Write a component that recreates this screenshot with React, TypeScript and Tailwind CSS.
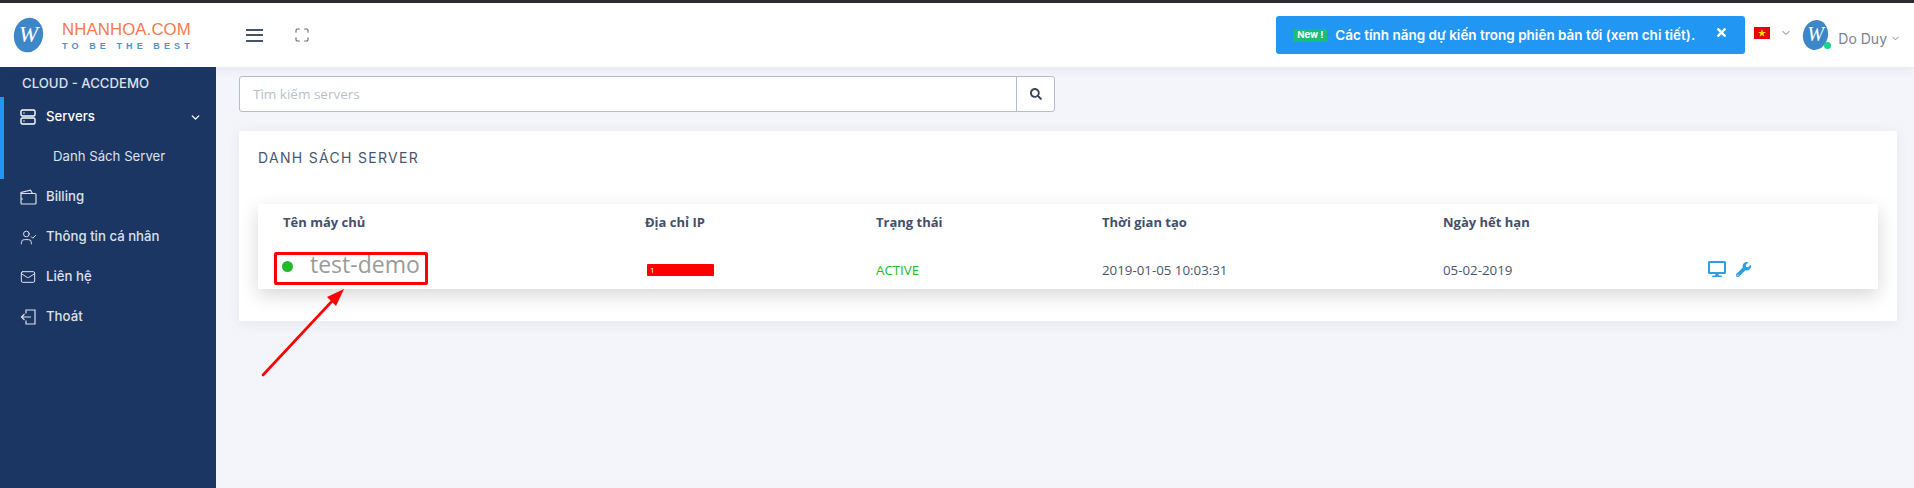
import React from "react";
import { Maximize, ChevronDown, UserCheck, Mail } from "lucide-react";
import { FaDesktop, FaWrench, FaSearch, FaTimes } from "react-icons/fa";

const menuFont = "font-['Inter','Liberation_Sans',sans-serif]";

function ServerIcon() {
  return (
    <svg width="16" height="16" viewBox="0 0 16 16" fill="none" stroke="currentColor" strokeWidth="1.4">
      <rect x="1" y="1" width="14" height="6" rx="1.5" />
      <rect x="1" y="9" width="14" height="6" rx="1.5" />
      <path d="M3.5 4h1M3.5 12h1" />
    </svg>
  );
}

function WalletIcon() {
  return (
    <svg width="17" height="16" viewBox="0 0 17 16" fill="none" stroke="currentColor" strokeWidth="1.2">
      <path d="M1 5V3.5L10.5 1.2 12.5 4.5" />
      <rect x="1" y="4.5" width="15" height="10.5" rx="1" />
      <path d="M1 10h2" />
    </svg>
  );
}

function ExitIcon() {
  return (
    <svg width="16" height="16" viewBox="0 0 16 16" fill="none" stroke="currentColor" strokeWidth="1.2">
      <path d="M6 4.5V1h9v14H6v-3.5" />
      <path d="M11 8H1.5M4.5 5L1.5 8l3 3" />
    </svg>
  );
}

function LogoMark({ w, h, size = 22 }: { w: number; h: number; size?: number }) {
  return (
    <svg width={w} height={h} viewBox="0 0 32 36">
      <ellipse cx="16" cy="18" rx="15" ry="18" transform="rotate(12 16 18)" fill="#3d87c8" />
      <text x="16" y="25" textAnchor="middle" fontFamily="Liberation Serif, serif" fontStyle="italic" fontSize={size} fill="#fff">
        W
      </text>
    </svg>
  );
}

function MenuRow({ icon, label }: { icon: React.ReactNode; label: string }) {
  return (
    <div className="flex h-10 items-center pl-5">
      <span className="flex w-[26px] shrink-0 items-center">{icon}</span>
      <span>{label}</span>
    </div>
  );
}

export default function App() {
  return (
    <div className="relative flex h-[488px] w-[1914px] flex-col overflow-hidden bg-[#f4f5fa] font-['Open_Sans','Liberation_Sans',sans-serif] text-[#4a5670]">
      <div className="h-[3px] shrink-0 bg-[#2b2d31]" />

      <header className="relative z-10 flex h-16 shrink-0 items-center bg-white shadow-[0_2px_10px_rgba(60,70,110,0.08)]">
        <div className="flex w-[246px] shrink-0 items-center pl-[13px]">
          <LogoMark w={31} h={36} size={24} />
          <div className="ml-[18px] flex flex-col pt-[3px]">
            <span className="text-[16.8px] leading-[16px] tracking-[0.1px] text-[#f47b4f] font-['Liberation_Sans',sans-serif]">NHANHOA.COM</span>
            <span className="mt-[3px] text-[9px] leading-[10px] font-bold tracking-[4.1px] whitespace-nowrap text-[#4b95d1] font-['Liberation_Sans',sans-serif]">TO BE THE BEST</span>
          </div>
        </div>
        <div className="flex w-[17px] flex-col gap-[3.5px]">
          <span className="h-[2px] bg-[#46536b]" />
          <span className="h-[2px] bg-[#46536b]" />
          <span className="h-[2px] bg-[#46536b]" />
        </div>
        <Maximize className="ml-[31px] text-[#5a6478]" size={16} strokeWidth={1.6} />

        <div className={`ml-auto flex items-center pr-[13px] ${menuFont}`}>
          <div className="flex h-[38px] w-[469px] items-center rounded-[3px] bg-[#2196f3] pl-[17px] text-white">
            <span className="flex h-[13px] w-[34px] shrink-0 items-center justify-center rounded-[1px] bg-[#1abc7b] text-[9.5px] font-bold whitespace-nowrap">New !</span>
            <span className="ml-[8px] text-[13.5px] font-semibold whitespace-nowrap">Các tính năng dự kiến trong phiên bản tới (xem chi tiết).</span>
            <FaTimes className="mb-[6px] ml-auto mr-[17px] text-white" size={13} />
          </div>
          <svg className="ml-[9px] mb-[5px]" width="16" height="12" viewBox="0 0 16 12">
            <rect width="16" height="12" fill="#ee0000" />
            <polygon points="8,2 9,5 12,5 9.5,6.8 10.5,9.7 8,8 5.5,9.7 6.5,6.8 4,5 7,5" fill="#ffdd00" />
          </svg>
          <ChevronDown className="ml-[10px] mb-[5px] text-[#6c7486]" size={12} />
          <div className="relative ml-[10px] h-[30px]">
            <LogoMark w={27} h={30} size={24} />
            <span className="absolute right-[-2px] bottom-[1px] h-[7px] w-[7px] rounded-full bg-[#1ed18c]" />
          </div>
          <span className="ml-[9px] mt-[6px] text-[14px] text-[#7a8192]">Do Duy</span>
          <ChevronDown className="ml-[3px] mt-[6px] text-[#7a8192]" size={11} />
        </div>
      </header>

      <div className="flex min-h-0 flex-1">
        <aside className={`w-[216px] shrink-0 bg-[#1c3664] pt-[6px] text-[13.2px] font-medium text-[#dde1e8] ${menuFont}`}>
          <div className="h-6 pl-[22px] leading-5">CLOUD - ACCDEMO</div>
          <div className="h-[82px] border-l-4 border-[#2196f3]">
            <div className="relative -ml-1 flex h-10 items-center pl-5 text-white">
              <span className="flex w-[26px] items-center"><ServerIcon /></span>
              <span>Servers</span>
              <ChevronDown className="absolute right-[14px]" size={13} strokeWidth={2.5} />
            </div>
            <div className="flex h-10 items-center pl-[49px] font-normal">Danh Sách Server</div>
          </div>
          <div className="-mt-[2px]">
            <MenuRow icon={<WalletIcon />} label="Billing" />
            <MenuRow icon={<UserCheck size={17} strokeWidth={1.4} />} label="Thông tin cá nhân" />
            <MenuRow icon={<Mail size={16} strokeWidth={1.5} />} label="Liên hệ" />
            <MenuRow icon={<ExitIcon />} label="Thoát" />
          </div>
        </aside>

        <main className="min-w-0 flex-1 pt-[9px] pr-[17px] pl-[23px]">
          <div className="flex h-9 w-[816px] rounded-[3px] border border-[#b5bccb] bg-white">
            <div className="flex flex-1 items-center pl-[13px] text-[13.5px] text-[#b9bfca]">Tìm kiếm servers</div>
            <div className="flex w-[38px] items-center justify-center border-l border-[#b5bccb] text-[#3d4657]">
              <FaSearch size={12} />
            </div>
          </div>

          <section className="mt-[19px] h-[190px] bg-white px-[19px] pt-[17px] shadow-[0_2px_12px_rgba(60,70,110,0.08)]">
            <h2 className={`text-[14px] leading-5 font-normal tracking-[1.3px] text-[#4a5670] ${menuFont}`}>DANH SÁCH SERVER</h2>
            <div className="mt-[36px] h-[85px] bg-white shadow-[0_6px_18px_rgba(0,0,0,0.16)]">
              <div className="grid h-[36px] grid-cols-[387px_231px_226px_341px_1fr] items-center pt-[2px] text-[13px] font-bold text-[#444f6b]">
                <span className="pl-[25px]">Tên máy chủ</span>
                <span>Địa chỉ IP</span>
                <span>Trạng thái</span>
                <span>Thời gian tạo</span>
                <span>Ngày hết hạn</span>
              </div>
              <div className="grid h-[49px] grid-cols-[387px_231px_226px_341px_265px_1fr] items-center text-[13.3px] text-[#4a5670]">
                <div className="flex items-center pl-6">
                  <span className="h-[11px] w-[11px] translate-y-[2px] rounded-full bg-[#22b92b]" />
                  <span className="ml-[17px] text-[23px] leading-none text-[#9b9b9b]">test-demo</span>
                </div>
                <div className="flex items-center pt-[11px] pl-[2px]">
                  <span className="h-3 w-[67px] rounded-[1px] bg-[#ff0000] pl-[3px] text-[8px] leading-3 text-white">1</span>
                </div>
                <span className="pt-[13px] text-[#22b92b]">ACTIVE</span>
                <span className="pt-[13px]">2019-01-05 10:03:31</span>
                <span className="pt-[13px]">05-02-2019</span>
                <div className="flex items-center gap-[10px] pt-[9px] text-[#2d9fe3]">
                  <FaDesktop size={18} />
                  <FaWrench size={15} />
                </div>
              </div>
            </div>
          </section>
        </main>
      </div>

      <div className="absolute top-[252px] left-[274px] z-20 h-[33px] w-[154px] rounded-[2px] border-[3px] border-[#ff0000]" />
      <svg className="absolute top-[285px] left-[258px] z-20" width="90" height="95" viewBox="0 0 90 95">
        <path d="M5 90 L76 14" stroke="#ff0000" strokeWidth="2.6" strokeLinecap="round" />
        <polygon points="86,4 78,21 69,12" fill="#ff0000" />
      </svg>
    </div>
  );
}
